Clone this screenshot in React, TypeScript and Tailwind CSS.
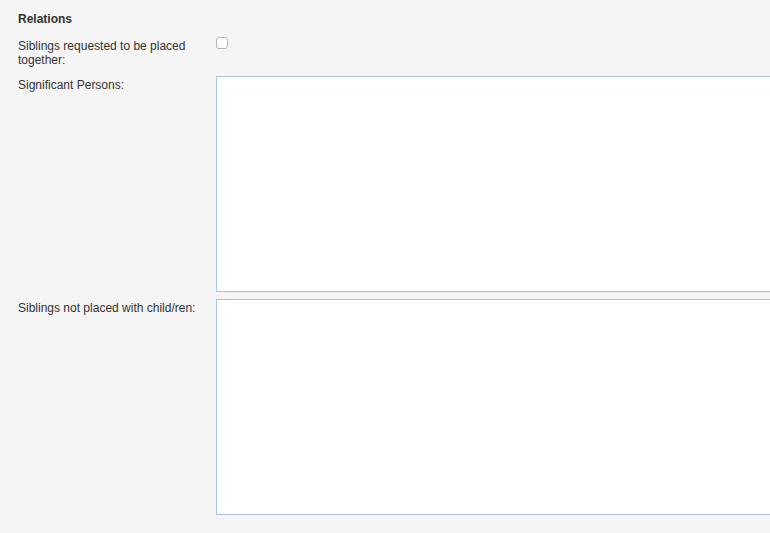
export default function App() {
  return (
    <div
      className="w-[770px] h-[533px] overflow-hidden bg-[#f5f5f5] text-[#333333] text-[12px] leading-[14px]"
      style={{ fontFamily: '"Liberation Sans", Arial, sans-serif' }}
    >
      <div className="pl-[18px] pt-[12px]">
        <h2 className="font-bold text-[12px] leading-[14px]">Relations</h2>
        <div className="mt-[13px] flex">
          <label className="w-[198px] shrink-0 pr-[10px]">Siblings requested to be placed together:</label>
          <div>
            <input
              type="checkbox"
              className="mt-[-2px] w-[12px] h-[12px] appearance-none rounded-[3px] border border-[#b5b5b5] bg-white block"
            />
          </div>
        </div>
        <div className="mt-[9px] flex">
          <label className="w-[198px] shrink-0 pt-[2px]">Significant Persons:</label>
          <textarea className="w-[600px] h-[216px] shrink-0 border border-[#a6c4dd] bg-white resize-none outline-none block" />
        </div>
        <div className="mt-[7px] flex">
          <label className="w-[198px] shrink-0 pt-[2px]">Siblings not placed with child/ren:</label>
          <textarea className="w-[600px] h-[216px] shrink-0 border border-[#a6c4dd] bg-white resize-none outline-none block" />
        </div>
      </div>
    </div>
  );
}
